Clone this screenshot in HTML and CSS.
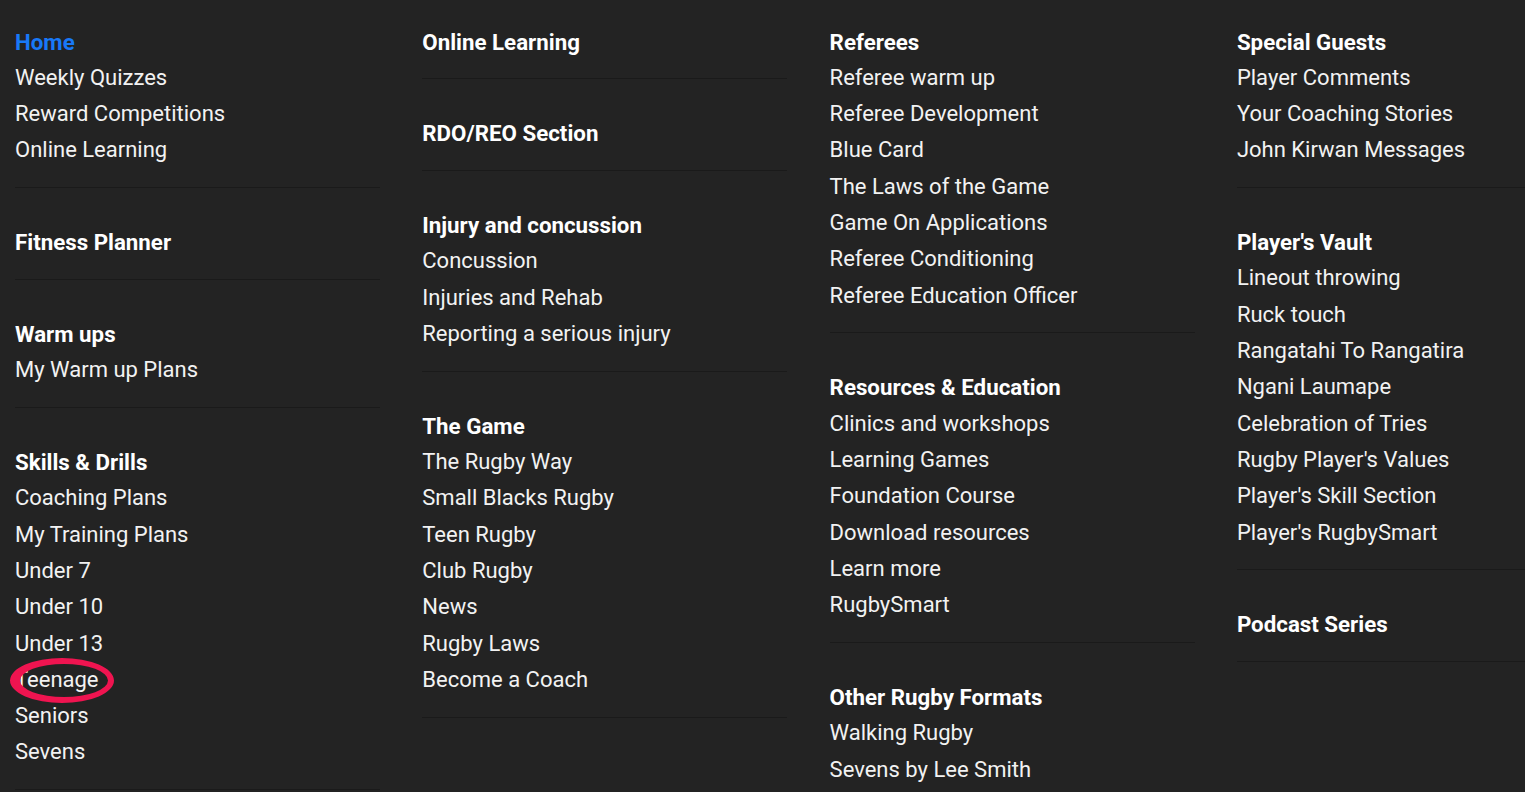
FILE: index.html
```html
<!DOCTYPE html>
<html lang="en">
<head>
<meta charset="utf-8">
<title>Menu</title>
<link rel="stylesheet" href="styles.css">
</head>
<body>
<nav class="menu">
  <div class="col">
    <div class="group">
      <a class="heading active" href="#">Home</a>
      <a class="item" href="#">Weekly Quizzes</a>
      <a class="item" href="#">Reward Competitions</a>
      <a class="item" href="#">Online Learning</a>
    </div>
    <div class="group">
      <a class="heading" href="#">Fitness Planner</a>
    </div>
    <div class="group">
      <a class="heading" href="#">Warm ups</a>
      <a class="item" href="#">My Warm up Plans</a>
    </div>
    <div class="group">
      <a class="heading" href="#">Skills &amp; Drills</a>
      <a class="item" href="#">Coaching Plans</a>
      <a class="item" href="#">My Training Plans</a>
      <a class="item" href="#">Under 7</a>
      <a class="item" href="#">Under 10</a>
      <a class="item" href="#">Under 13</a>
      <a class="item marked" href="#">Teenage<svg class="ring" width="110" height="50" viewBox="0 0 110 50"><path fill-rule="evenodd" d="M2 24.5a52 22.5 0 1 0 104 0a52 22.5 0 1 0 -104 0z M12 24.5a44 16.5 0 1 0 88 0a44 16.5 0 1 0 -88 0z"/></svg></a>
      <a class="item" href="#">Seniors</a>
      <a class="item" href="#">Sevens</a>
    </div>
  </div>
  <div class="col">
    <div class="group">
      <a class="heading" href="#">Online Learning</a>
    </div>
    <div class="group">
      <a class="heading" href="#">RDO/REO Section</a>
    </div>
    <div class="group">
      <a class="heading" href="#">Injury and concussion</a>
      <a class="item" href="#">Concussion</a>
      <a class="item" href="#">Injuries and Rehab</a>
      <a class="item" href="#">Reporting a serious injury</a>
    </div>
    <div class="group">
      <a class="heading" href="#">The Game</a>
      <a class="item" href="#">The Rugby Way</a>
      <a class="item" href="#">Small Blacks Rugby</a>
      <a class="item" href="#">Teen Rugby</a>
      <a class="item" href="#">Club Rugby</a>
      <a class="item" href="#">News</a>
      <a class="item" href="#">Rugby Laws</a>
      <a class="item" href="#">Become a Coach</a>
    </div>
  </div>
  <div class="col">
    <div class="group">
      <a class="heading" href="#">Referees</a>
      <a class="item" href="#">Referee warm up</a>
      <a class="item" href="#">Referee Development</a>
      <a class="item" href="#">Blue Card</a>
      <a class="item" href="#">The Laws of the Game</a>
      <a class="item" href="#">Game On Applications</a>
      <a class="item" href="#">Referee Conditioning</a>
      <a class="item" href="#">Referee Education Officer</a>
    </div>
    <div class="group">
      <a class="heading" href="#">Resources &amp; Education</a>
      <a class="item" href="#">Clinics and workshops</a>
      <a class="item" href="#">Learning Games</a>
      <a class="item" href="#">Foundation Course</a>
      <a class="item" href="#">Download resources</a>
      <a class="item" href="#">Learn more</a>
      <a class="item" href="#">RugbySmart</a>
    </div>
    <div class="group">
      <a class="heading" href="#">Other Rugby Formats</a>
      <a class="item" href="#">Walking Rugby</a>
      <a class="item" href="#">Sevens by Lee Smith</a>
    </div>
  </div>
  <div class="col">
    <div class="group">
      <a class="heading" href="#">Special Guests</a>
      <a class="item" href="#">Player Comments</a>
      <a class="item" href="#">Your Coaching Stories</a>
      <a class="item" href="#">John Kirwan Messages</a>
    </div>
    <div class="group">
      <a class="heading" href="#">Player's Vault</a>
      <a class="item" href="#">Lineout throwing</a>
      <a class="item" href="#">Ruck touch</a>
      <a class="item" href="#">Rangatahi To Rangatira</a>
      <a class="item" href="#">Ngani Laumape</a>
      <a class="item" href="#">Celebration of Tries</a>
      <a class="item" href="#">Rugby Player's Values</a>
      <a class="item" href="#">Player's Skill Section</a>
      <a class="item" href="#">Player's RugbySmart</a>
    </div>
    <div class="group">
      <a class="heading" href="#">Podcast Series</a>
    </div>
  </div>
</nav>
</body>
</html>
```

FILE: styles.css
```css
html, body {
  margin: 0;
  padding: 0;
  background: #232323;
  overflow: hidden;
  height: 792px;
}

body {
  font-family: Roboto, "Liberation Sans", sans-serif;
  font-size: 22px;
  color: #f4f4f4;
}

.menu {
  display: grid;
  grid-template-columns: repeat(4, 365px);
  column-gap: 42.3px;
  padding: 23.5px 0 0 15px;
  width: max-content;
  align-items: start;
}

.col {
  display: flex;
  flex-direction: column;
}

.group {
  display: flex;
  flex-direction: column;
  padding-bottom: 18.5px;
  border-bottom: 1px solid #1a1a1a;
  margin-bottom: 36px;
}

.heading,
.item {
  display: block;
  line-height: 36.3px;
  height: 36.3px;
  text-decoration: none;
  white-space: nowrap;
}

.heading {
  font-weight: 700;
  font-size: 22.3px;
  color: #ffffff;
}

.heading.active {
  color: #1879f8;
}

.item {
  font-weight: 400;
  color: #f2f2f2;
}

.marked {
  position: relative;
}

.ring {
  position: absolute;
  left: -7px;
  top: -6px;
  fill: #ef1450;
}
```
